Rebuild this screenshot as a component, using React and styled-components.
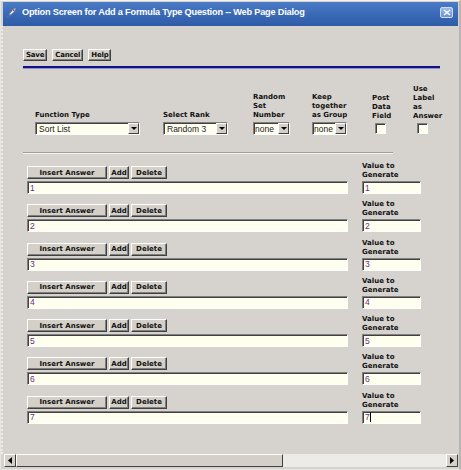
import styled, { createGlobalStyle } from 'styled-components';

const GlobalStyle = createGlobalStyle`
  html, body {
    margin: 0;
    padding: 0;
    background: #d4d0c8;
  }
  * {
    box-sizing: border-box;
  }
`;

const rows = [1, 2, 3, 4, 5, 6, 7];

const App = () => {
  return (
    <>
      <GlobalStyle />
      <Window>
        <TitleBar>
          <TitleIcon viewBox="0 0 14 14">
            <path d="M2 12 L5 8 L9 3 L12 2 L11 5 L6 10 Z" fill="#e8eef8" stroke="#5a6a90" strokeWidth="0.8" />
            <path d="M3 11 L6 9" stroke="#3b5aa0" strokeWidth="1.2" />
            <circle cx="9.5" cy="4.5" r="1" fill="#c0392b" />
          </TitleIcon>
          <TitleText>Option Screen for Add a Formula Type Question -- Web Page Dialog</TitleText>
          <CloseButton>
            <svg width="8" height="7" viewBox="0 0 8 7">
              <path d="M1 1 L7 6 M7 1 L1 6" stroke="#fff" strokeWidth="1.5" />
            </svg>
          </CloseButton>
        </TitleBar>

        <Body>
          <Toolbar>
            <Button>Save</Button>
            <Button>Cancel</Button>
            <Button>Help</Button>
          </Toolbar>
          <BlueRule />

          <OptionsRow>
            <OptionColumn>
              <Label>Function Type</Label>
              <Select width={105}>
                <span>Sort List</span>
                <Arrow />
              </Select>
            </OptionColumn>
            <OptionColumn>
              <Label>Select Rank</Label>
              <Select width={65}>
                <span>Random 3</span>
                <Arrow />
              </Select>
            </OptionColumn>
            <OptionColumn>
              <Label>
                <div>Random</div>
                <div>Set</div>
                <div>Number</div>
              </Label>
              <Select width={37} small>
                <span>none</span>
                <Arrow />
              </Select>
            </OptionColumn>
            <OptionColumn>
              <Label>
                <div>Keep</div>
                <div>together</div>
                <div>as Group</div>
              </Label>
              <Select width={35} small>
                <span>none</span>
                <Arrow />
              </Select>
            </OptionColumn>
            <OptionColumn>
              <Label>
                <div>Post</div>
                <div>Data</div>
                <div>Field</div>
              </Label>
              <Checkbox offset={3} />
            </OptionColumn>
            <OptionColumn>
              <Label>
                <div>Use</div>
                <div>Label</div>
                <div>as</div>
                <div>Answer</div>
              </Label>
              <Checkbox offset={4} />
            </OptionColumn>
          </OptionsRow>

          <GrayRule />

          <AnswerList>
            {rows.map(n => (
              <AnswerRow key={n}>
                <AnswerMain>
                  <ButtonGroup>
                    <RowButton width={80}>Insert Answer</RowButton>
                    <RowButton width={20}>Add</RowButton>
                    <RowButton width={36}>Delete</RowButton>
                  </ButtonGroup>
                  <TextBox width={321}>{n}</TextBox>
                </AnswerMain>
                <AnswerValue>
                  <Label>
                    <div>Value to</div>
                    <div>Generate</div>
                  </Label>
                  <TextBox width={59} caret={n === 7}>{n}</TextBox>
                </AnswerValue>
              </AnswerRow>
            ))}
          </AnswerList>
        </Body>

        <ScrollBar>
          <ScrollArrow>
            <svg width="4" height="7" viewBox="0 0 4 7"><path d="M4 0 L0 3.5 L4 7 Z" fill="#000" /></svg>
          </ScrollArrow>
          <ScrollThumb />
          <ScrollTrack />
          <ScrollArrow>
            <svg width="4" height="7" viewBox="0 0 4 7"><path d="M0 0 L4 3.5 L0 7 Z" fill="#000" /></svg>
          </ScrollArrow>
        </ScrollBar>
      </Window>
    </>
  );
};

const Window = styled.div`
  width: 461px;
  height: 470px;
  display: flex;
  flex-direction: column;
  background: #d6d3ce;
  border: 1px solid #e8e6e2;
  border-right: 2px solid #b8b6b2;
  border-top: 1px solid #f4f4f4;
  font-family: "DejaVu Sans", Verdana, sans-serif;
  overflow: hidden;
`;

const TitleBar = styled.div`
  height: 24px;
  margin: 1px 1px 0 2px;
  display: flex;
  align-items: flex-start;
  padding: 4px 5px 0 2px;
  background: linear-gradient(to bottom, #4c7cc6 0%, #3a69b6 50%, #2f5ca6 100%);
  color: #fff;
`;

const TitleIcon = styled.svg`
  width: 13px;
  height: 13px;
  flex: none;
`;

const TitleText = styled.div`
  flex: 1;
  margin-left: 4px;
  margin-top: 1px;
  font-family: "Liberation Sans", Arial, sans-serif;
  font-weight: bold;
  font-size: 9.2px;
  letter-spacing: -0.2px;
  white-space: nowrap;
`;

const CloseButton = styled.div`
  width: 13px;
  height: 11px;
  margin-top: 1px;
  display: flex;
  align-items: center;
  justify-content: center;
  background: linear-gradient(to bottom, #9cbcec, #6a92d2);
  border: 1px solid #d0dcf0;
  border-radius: 2px;
`;

const Body = styled.div`
  flex: 1;
  display: flex;
  flex-direction: column;
  padding-left: 20px;
  border-left: 2px dotted #ecebe8;
`;

const Toolbar = styled.div`
  display: flex;
  gap: 5px;
  margin-top: 23px;
`;

const Button = styled.div`
  height: 12px;
  padding: 0 2px;
  display: flex;
  align-items: center;
  font-size: 7px;
  font-weight: bold;
  letter-spacing: -0.2px;
  color: #111;
  background: #d4d0c8;
  border: 1px solid;
  border-color: #ffffff #404040 #404040 #ffffff;
  box-shadow: inset -1px -1px 0 #808080;
  white-space: nowrap;
`;

const BlueRule = styled.div`
  width: 417px;
  height: 3px;
  margin-top: 5px;
  border-top: 2px solid #10108a;
  border-bottom: 1px solid #9090c0;
`;

const OptionsRow = styled.div`
  display: grid;
  grid-template-columns: 128px 90px 59px 60px 41px auto;
  align-items: end;
  margin-top: 16px;
  padding-left: 12px;
`;

const OptionColumn = styled.div`
  display: flex;
  flex-direction: column;
`;

const Label = styled.div`
  font-size: 7px;
  font-weight: bold;
  line-height: 9px;
  color: #111;
  white-space: nowrap;
`;

const Select = styled.div`
  width: ${p => p.width}px;
  height: 13px;
  margin-top: 2px;
  display: flex;
  align-items: center;
  justify-content: space-between;
  padding-left: ${p => (p.small ? 1 : 3)}px;
  background: #fffff0;
  border: 1px solid;
  border-color: #808080 #ffffff #ffffff #808080;
  box-shadow: inset 1px 1px 0 #404040;
  font-family: "Liberation Sans", Arial, sans-serif;
  font-size: 8.5px;
  color: #222;
  white-space: nowrap;
  overflow: hidden;
`;

const Arrow = styled.div`
  width: 11px;
  height: 11px;
  flex: none;
  background: #d4d0c8;
  border: 1px solid;
  border-color: #ffffff #404040 #404040 #ffffff;
  position: relative;
  &::after {
    content: '';
    position: absolute;
    left: 2px;
    top: 3px;
    border-left: 3px solid transparent;
    border-right: 3px solid transparent;
    border-top: 3px solid #000;
  }
`;

const Checkbox = styled.div`
  width: 11px;
  height: 11px;
  margin: 2px 0 1px ${p => p.offset}px;
  background: #fffff0;
  border: 1px solid;
  border-color: #808080 #ffffff #ffffff #808080;
  box-shadow: inset 1px 1px 0 #404040;
`;

const GrayRule = styled.div`
  width: 370px;
  height: 2px;
  margin-top: 17px;
  border-top: 1px solid #a09e9a;
  border-bottom: 1px solid #f4f3f1;
`;

const AnswerList = styled.div`
  display: flex;
  flex-direction: column;
  gap: 6.3px;
  margin-top: 8px;
  padding-left: 4px;
`;

const AnswerRow = styled.div`
  display: flex;
  align-items: flex-end;
  gap: 14px;
`;

const AnswerMain = styled.div`
  display: flex;
  flex-direction: column;
  gap: 2px;
`;

const ButtonGroup = styled.div`
  display: flex;
  gap: 2px;
`;

const RowButton = styled(Button)`
  width: ${p => p.width}px;
  height: 13px;
  justify-content: center;
  padding: 0;
  letter-spacing: 0;
`;

const AnswerValue = styled.div`
  display: flex;
  flex-direction: column;
  gap: 1px;
`;

const TextBox = styled.div`
  width: ${p => p.width}px;
  height: 13px;
  display: flex;
  align-items: center;
  padding-left: 2px;
  background: #fffff0;
  border: 1px solid;
  border-color: #808080 #ffffff #ffffff #808080;
  box-shadow: inset 1px 1px 0 #404040;
  font-family: "Liberation Sans", Arial, sans-serif;
  font-size: 8.5px;
  color: #6a2c8a;
  ${p => p.caret && `&::after { content: ''; width: 1px; height: 10px; background: #000; }`}
`;

const ScrollBar = styled.div`
  height: 13px;
  margin: 0 1px 2px 3px;
  display: flex;
  background: #eceae6;
`;

const ScrollArrow = styled.div`
  width: 12px;
  height: 13px;
  display: flex;
  align-items: center;
  justify-content: center;
  background: #d4d0c8;
  border: 1px solid;
  border-color: #ffffff #404040 #404040 #ffffff;
`;

const ScrollThumb = styled.div`
  width: 267px;
  background: #d4d0c8;
  border: 1px solid;
  border-color: #ffffff #404040 #404040 #ffffff;
`;

const ScrollTrack = styled.div`
  flex: 1;
  background: #edebe8;
`;

export default App;
